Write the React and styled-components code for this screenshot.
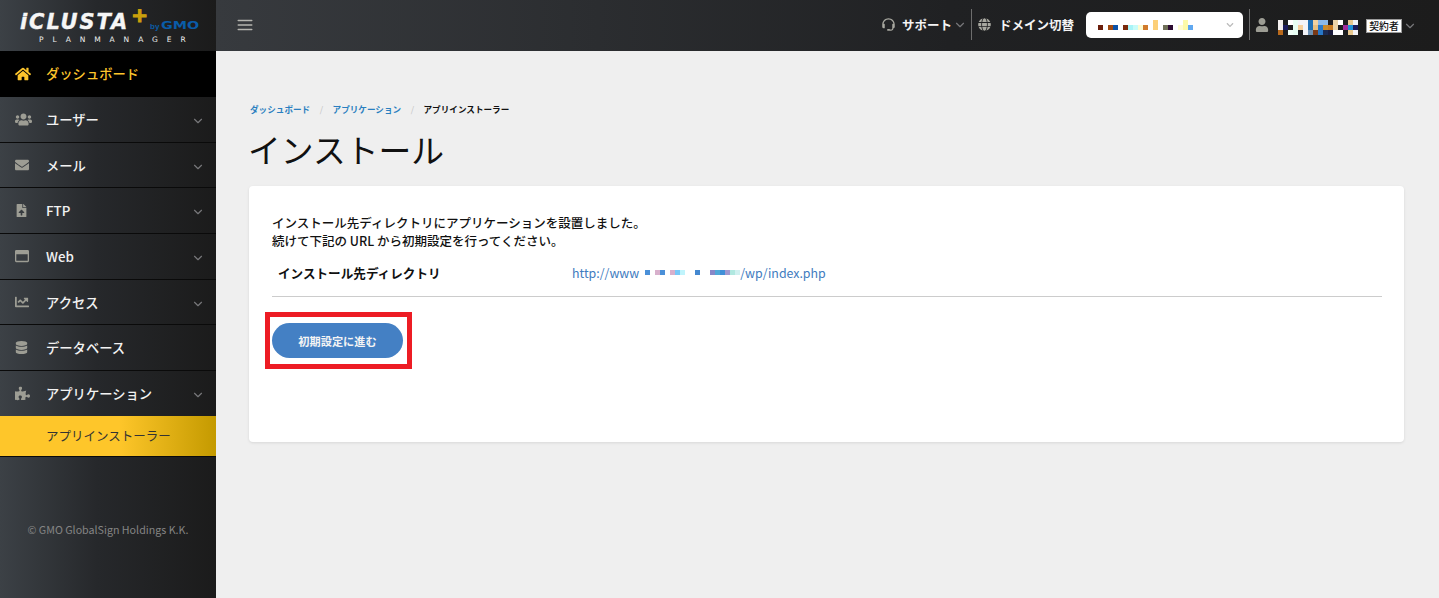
import React from 'react'
import styled, { createGlobalStyle } from 'styled-components'
import {
  FaHome, FaUsers, FaEnvelope, FaFileUpload, FaRegWindowMaximize,
  FaChartLine, FaDatabase, FaPuzzlePiece, FaGlobe, FaUser, FaChevronDown
} from 'react-icons/fa'
import { FiChevronDown, FiMenu } from 'react-icons/fi'
import { BiSupport } from 'react-icons/bi'

const GlobalStyle = createGlobalStyle`
  html, body { margin: 0; padding: 0; height: 100%; }
  body {
    background: #efefef;
    font-family: "Noto Sans CJK JP", "Noto Sans", sans-serif;
    color: #111;
    overflow: hidden;
  }
  * { box-sizing: border-box; }
`

const menu = [
  { label: 'ユーザー', icon: FaUsers, size: 17, arrow: true },
  { label: 'メール', icon: FaEnvelope, size: 14, arrow: true },
  { label: 'FTP', icon: FaFileUpload, size: 13, arrow: true },
  { label: 'Web', icon: FaRegWindowMaximize, size: 14, arrow: true },
  { label: 'アクセス', icon: FaChartLine, size: 14, arrow: true },
  { label: 'データベース', icon: FaDatabase, size: 13, arrow: false },
  { label: 'アプリケーション', icon: FaPuzzlePiece, size: 15, arrow: true }
]

const domainCells = [
  [0, 5, '#6b1e0b'], [10, 5, '#a04a10'], [15, 5, '#0a52a8'], [25, 5, '#7a2a0c'],
  [30, 5, '#a8f4f8'], [35, 5, '#c8fbf8'], [40, 5, '#fffbd0'], [45, 5, '#d07a2a'],
  [55, 0, '#fccf78'], [65, 5, '#6f6f58'], [70, 5, '#2b0a30'], [80, 5, '#fffcd0'],
  [85, 0, '#fdfaa8'], [90, 5, '#60a8f0']
]

const userCols = [
  ['#f3efee', '#f3efee', '#b96a1c'], ['#1c1d20', '#1c1c5c', '#1c1d20'],
  ['#ffffff', '#1c1d20', '#f0fff8'], ['#e8fff4', '#e8fff4', '#e8fff4'],
  ['#f3f3f8', '#f5cf9c', '#1c1d20'], ['#f3f3f8', '#f3f3f8', '#f3f3f8'],
  ['#1f6fb5', '#1f6fb5', '#6f93b5'], ['#f2d2a0', '#e8c080', '#7a3a18'],
  ['#8ab8e8', '#2878c8', '#2878c8'], ['#8ab8e8', '#c98a2a', '#1c2a50'],
  ['#1c1d20', '#c87a20', '#1c1d3c'], ['#ecd4a8', '#ecd4a8', '#ffffff'],
  ['#ffffff', '#1c1d20', '#ffffff'], ['#1c1d20', '#a02a9c', '#1c1d20'],
  ['#e8c890', '#2090d8', '#e8c890'], ['#f3f3f8', '#1c1c5c', '#f3f3f8']
]

const urlCells = [
  [0, '#4a90d8'], [10, '#d8b0cc'], [15, '#4a90d8'], [25, '#d8b0cc'], [30, '#78c8f8'],
  [35, '#c0f4fc'], [50, '#4488d0'], [65, '#8888c8'], [70, '#50a8d8'], [75, '#4090d8'],
  [80, '#a098d0'], [85, '#b0e8e0'], [90, '#d0f0f0']
]

const App = () => (
  <>
    <GlobalStyle />
    <Page>
      <Sidebar>
        <Logo>
          <LogoTop>
            <LogoName>iCLUSTA</LogoName>
            <LogoPlus>+</LogoPlus>
            <LogoBy>by</LogoBy>
            <LogoGmo>GMO</LogoGmo>
          </LogoTop>
          <LogoSub>PLANMANAGER</LogoSub>
        </Logo>
        <DashboardItem>
          <IconSlot><FaHome size={16} /></IconSlot>
          ダッシュボード
        </DashboardItem>
        {menu.map(({ label, icon: Icon, size, arrow }) => (
          <MenuItem key={label}>
            <IconSlot><Icon size={size} /></IconSlot>
            <MenuLabel>{label}</MenuLabel>
            {arrow && <MenuArrow><FiChevronDown size={14} /></MenuArrow>}
          </MenuItem>
        ))}
        <SubItem>アプリインストーラー</SubItem>
        <Copyright>© GMO GlobalSign Holdings K.K.</Copyright>
      </Sidebar>

      <Main>
        <Header>
          <MenuButton><FiMenu size={18} /></MenuButton>
          <HeaderRight>
            <HeaderLink>
              <HeaderIcon><BiSupport size={15} /></HeaderIcon>
              サポート
              <SmallArrow><FiChevronDown size={14} /></SmallArrow>
            </HeaderLink>
            <Divider />
            <HeaderLink>
              <GlobeIcon><FaGlobe size={13} /></GlobeIcon>
              <DomainLabel>ドメイン切替</DomainLabel>
            </HeaderLink>
            <DomainSelect>
              <svg width="95" height="10" viewBox="0 0 95 10">
                {domainCells.map(([x, y, c]) => (
                  <rect key={x} x={x} y={y} width="5" height={10 - y} fill={c} />
                ))}
              </svg>
              <FaChevronDown size={8} color="#bbb" />
            </DomainSelect>
            <Divider />
            <UserIcon><FaUser size={14} /></UserIcon>
            <UserMosaic width="80" height="15" viewBox="0 0 80 15">
              {userCols.map((col, i) => col.map((c, j) => (
                <rect key={`${i}-${j}`} x={i * 5} y={j * 5} width="5" height="5" fill={c} />
              )))}
            </UserMosaic>
            <RoleBadge>契約者</RoleBadge>
            <UserArrow><FiChevronDown size={14} /></UserArrow>
          </HeaderRight>
        </Header>

        <Content>
          <Breadcrumb>
            <Crumb>ダッシュボード</Crumb>
            <CrumbSep>/</CrumbSep>
            <Crumb>アプリケーション</Crumb>
            <CrumbSep>/</CrumbSep>
            <CrumbCurrent>アプリインストーラー</CrumbCurrent>
          </Breadcrumb>
          <Title>インストール</Title>
          <Card>
            <Message>
              インストール先ディレクトリにアプリケーションを設置しました。<br />
              続けて下記の URL から初期設定を行ってください。
            </Message>
            <InfoRow>
              <InfoKey>インストール先ディレクトリ</InfoKey>
              <InfoLink>
                http://www
                <UrlMosaic width="95" height="5" viewBox="0 0 95 5">
                  {urlCells.map(([x, c]) => <rect key={x} x={x} width="5" height="5" fill={c} />)}
                </UrlMosaic>
                /wp/index.php
              </InfoLink>
            </InfoRow>
            <Highlight>
              <NextButton>初期設定に進む</NextButton>
            </Highlight>
          </Card>
        </Content>
      </Main>
    </Page>
  </>
)

export default App

const Page = styled.div`
  display: flex;
  height: 598px;
  overflow: hidden;
`

const Sidebar = styled.aside`
  width: 216px;
  flex: none;
  display: flex;
  flex-direction: column;
  background: linear-gradient(90deg, #3c4146 0%, #26282b 45%, #1b1b1b 100%);
`

const Logo = styled.div`
  height: 51px;
  padding: 9px 0 0 20px;
`

const LogoTop = styled.div`
  display: flex;
  align-items: baseline;
  height: 26px;
`

const LogoName = styled.span`
  font: italic 700 21px/26px "DejaVu Sans", sans-serif;
  letter-spacing: 1.9px;
  color: #f6f6f6;
  -webkit-text-stroke: 0.4px #f6f6f6;
`

const LogoPlus = styled.span`
  font: italic 700 20px/20px "DejaVu Sans", sans-serif;
  color: #c9a00c;
  -webkit-text-stroke: 1.2px #c9a00c;
  margin-left: 2px;
  transform: translateY(-7px);
`

const LogoBy = styled.span`
  font: 700 8px/10px "Liberation Sans", sans-serif;
  color: #0a5ca8;
  margin-left: 2px;
`

const LogoGmo = styled.span`
  font: 700 11px/12px "DejaVu Sans", sans-serif;
  color: #0a5ca8;
  transform: scaleX(1.3);
  transform-origin: left;
  margin-left: 2px;
`

const LogoSub = styled.div`
  font: 400 7.5px/10px "DejaVu Sans", sans-serif;
  color: #eee;
  letter-spacing: 8.9px;
  margin-left: 19px;
  white-space: nowrap;
`

const IconSlot = styled.span`
  width: 46px;
  padding-left: 15px;
  display: flex;
  align-items: center;
  flex: none;
`

const DashboardItem = styled.div`
  height: 46px;
  padding-bottom: 1px;
  display: flex;
  align-items: center;
  background: #000;
  color: #fdc52c;
  font-size: 13.3px;
  font-weight: 500;
`

const MenuItem = styled.div`
  height: 45.7px;
  display: flex;
  align-items: center;
  color: #f2f2f2;
  font-size: 13.3px;
  font-weight: 500;
  border-bottom: 1px solid #0a0a0a;
  svg { color: #9d9d94; }
`

const MenuLabel = styled.span`
  flex: 1;
`

const MenuArrow = styled.span`
  display: flex;
  margin: 3px 11px 0 0;
  svg { color: #77777a; }
`

const SubItem = styled.div`
  height: 41px;
  margin-top: -1px;
  padding-left: 46px;
  display: flex;
  align-items: center;
  font-size: 12.5px;
  color: #333;
  background: linear-gradient(90deg, #fec62a 0%, #fec62a 55%, #c49a00 100%);
  border-bottom: 1px solid #0a0a0a;
`

const Copyright = styled.div`
  margin-top: 65px;
  text-align: center;
  font-size: 10.7px;
  line-height: 16px;
  color: #858585;
`

const Main = styled.div`
  flex: 1;
  min-width: 0;
`

const Header = styled.header`
  height: 51px;
  display: flex;
  align-items: center;
  justify-content: space-between;
  padding: 0 22px 2px 20px;
  background: linear-gradient(90deg, #373a3e 0%, #202123 60%, #1c1c1c 100%);
`

const MenuButton = styled.span`
  display: flex;
  color: #b5b5b0;
`

const HeaderRight = styled.div`
  display: flex;
  align-items: center;
  color: #f4f4f4;
`

const HeaderLink = styled.div`
  display: flex;
  align-items: center;
  font-size: 12.5px;
  font-weight: 700;
`

const HeaderIcon = styled.span`
  display: flex;
  color: #a8a8a0;
  margin-right: 6px;
`

const GlobeIcon = styled(HeaderIcon)`
  margin-right: 8px;
`

const DomainLabel = styled.span`
  margin-right: 12px;
`

const SmallArrow = styled.span`
  display: flex;
  margin: 1px -2px 0 1px;
  color: #77777a;
`

const UserArrow = styled(SmallArrow)`
  margin: 3px 0 0 1px;
`

const Divider = styled.span`
  width: 1px;
  height: 31px;
  background: #6d6d6d;
  margin: 0 6px;
`

const DomainSelect = styled.div`
  width: 157px;
  height: 26px;
  padding: 0 9px 0 12px;
  background: #fff;
  border-radius: 5px;
  display: flex;
  align-items: center;
  justify-content: space-between;
`

const UserIcon = styled.span`
  display: flex;
  color: #9d9d94;
  margin: 0 9px 0 -1px;
`

const UserMosaic = styled.svg`
  margin-top: 6px;
`

const RoleBadge = styled.span`
  margin: 3px 0 0 8px;
  width: 36px;
  height: 14px;
  display: flex;
  align-items: center;
  justify-content: center;
  background: #fff;
  border: 1px solid #9a9a9a;
  color: #111;
  font-size: 9.8px;
  font-weight: 500;
`

const Content = styled.main`
  padding: 51px 35px 0 33px;
`

const Breadcrumb = styled.nav`
  display: flex;
  align-items: center;
  height: 14px;
  padding-left: 1px;
  font-size: 8.6px;
  font-weight: 700;
`

const Crumb = styled.span`
  color: #2a7fc0;
`

const CrumbSep = styled.span`
  color: #c4c4c4;
  font-weight: 400;
  margin: 0 9.5px;
`

const CrumbCurrent = styled.span`
  color: #111;
`

const Title = styled.h1`
  margin: 9px 0 14px -1px;
  font-size: 32.8px;
  font-weight: 400;
  line-height: 47px;
  color: #111;
`

const Card = styled.section`
  height: 256px;
  padding: 28px 22px 0 23px;
  background: #fff;
  border-radius: 4px;
  box-shadow: 0 1px 3px rgba(0, 0, 0, 0.1);
`

const Message = styled.p`
  margin: 0;
  font-size: 12.5px;
  font-weight: 500;
  line-height: 18px;
`

const InfoRow = styled.div`
  display: flex;
  align-items: center;
  height: 47px;
  margin-bottom: 15px;
  padding: 0 0 1px 6px;
  border-bottom: 1px solid #ccc;
`

const InfoKey = styled.span`
  width: 294px;
  font-size: 12.6px;
  font-weight: 700;
`

const InfoLink = styled.a`
  display: flex;
  align-items: center;
  font-size: 12.4px;
  color: #3f7cc0;
`

const UrlMosaic = styled.svg`
  margin-left: 6px;
`

const Highlight = styled.div`
  display: inline-block;
  margin-left: -7px;
  padding: 6px 4px 6px 2px;
  border: 5px solid #ed1c24;
`

const NextButton = styled.button`
  display: block;
  width: 131px;
  height: 35px;
  padding: 0;
  border: 0;
  border-radius: 18px;
  background: #4480c4;
  color: #f4f4f4;
  font-family: inherit;
  font-size: 11.2px;
  font-weight: 700;
`
